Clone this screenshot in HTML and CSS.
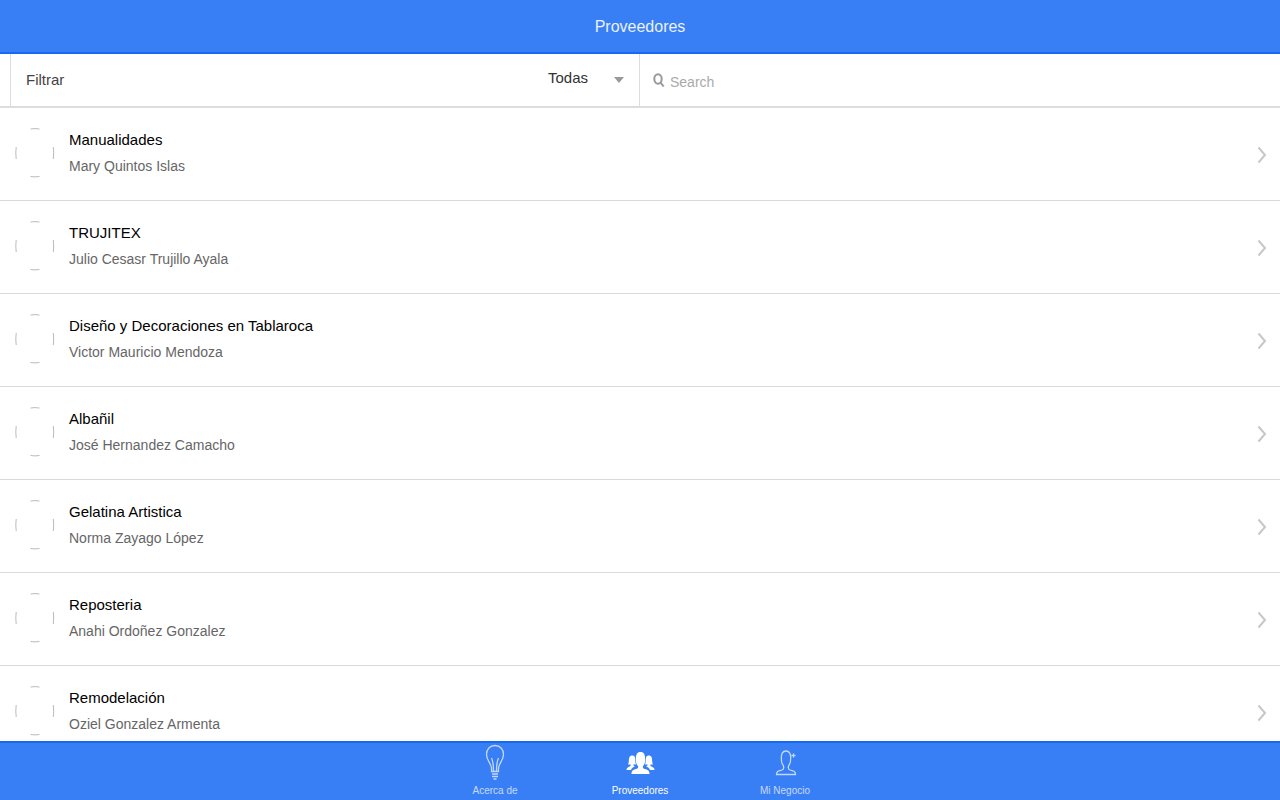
FILE: index.html
```html
<!DOCTYPE html>
<html lang="es">
<head>
<meta charset="utf-8">
<meta name="viewport" content="width=device-width, initial-scale=1">
<title>Proveedores</title>
<link rel="stylesheet" href="styles.css">
</head>
<body>
<svg class="defs" aria-hidden="true">
  <symbol id="avatar" viewBox="0 0 40 50"><path d="M15.500 1q4.500-.8 9 0M15.500 48.500q4.500.8 9 0M1.200 19q-.8 6 0 12M38.300 19q.8 6 0 12"/></symbol>
  <symbol id="chevron" viewBox="0 0 10 18"><path d="M1.500 1.500L8 9l-6.500 7.500"/></symbol>
</svg>
<header class="bar"><h1 class="title">Proveedores</h1></header>
<div class="filters">
  <div class="filter">
    <label class="filter-label" for="category">Filtrar</label>
    <div class="picker">
      <select class="select" id="category"><option>Todas</option></select>
      <svg class="caret" viewBox="0 0 10 6" aria-hidden="true"><path d="M0 0h10L5 6z"/></svg>
    </div>
  </div>
  <label class="search">
    <svg class="lens" viewBox="0 0 12 14" aria-hidden="true"><ellipse cx="5" cy="6" rx="3.700" ry="4.700"/><path d="M7.500 9.500l3.200 4"/></svg>
    <input class="search-input" type="search" placeholder="Search" aria-label="Search">
  </label>
</div>
<main class="content">
  <ul class="list">
    <li><a class="item" href="#"><svg class="avatar"><use href="#avatar"/></svg><span class="text"><span class="name">Manualidades</span><span class="owner">Mary Quintos Islas</span></span><svg class="chevron"><use href="#chevron"/></svg></a></li>
    <li><a class="item" href="#"><svg class="avatar"><use href="#avatar"/></svg><span class="text"><span class="name">TRUJITEX</span><span class="owner">Julio Cesasr Trujillo Ayala</span></span><svg class="chevron"><use href="#chevron"/></svg></a></li>
    <li><a class="item" href="#"><svg class="avatar"><use href="#avatar"/></svg><span class="text"><span class="name">Diseño y Decoraciones en Tablaroca</span><span class="owner">Victor Mauricio Mendoza</span></span><svg class="chevron"><use href="#chevron"/></svg></a></li>
    <li><a class="item" href="#"><svg class="avatar"><use href="#avatar"/></svg><span class="text"><span class="name">Albañil</span><span class="owner">José Hernandez Camacho</span></span><svg class="chevron"><use href="#chevron"/></svg></a></li>
    <li><a class="item" href="#"><svg class="avatar"><use href="#avatar"/></svg><span class="text"><span class="name">Gelatina Artistica</span><span class="owner">Norma Zayago López</span></span><svg class="chevron"><use href="#chevron"/></svg></a></li>
    <li><a class="item" href="#"><svg class="avatar"><use href="#avatar"/></svg><span class="text"><span class="name">Reposteria</span><span class="owner">Anahi Ordoñez Gonzalez</span></span><svg class="chevron"><use href="#chevron"/></svg></a></li>
    <li><a class="item" href="#"><svg class="avatar"><use href="#avatar"/></svg><span class="text"><span class="name">Remodelación</span><span class="owner">Oziel Gonzalez Armenta</span></span><svg class="chevron"><use href="#chevron"/></svg></a></li>
  </ul>
</main>
<nav class="tabs">
  <a class="tab" href="#">
    <svg class="tab-icon" viewBox="0 0 30 38" aria-hidden="true"><path d="M11.500 28.500v-3.500C11 20 6.500 17.500 6.500 11.500 6.500 6 10 2.500 15 2.500s8.500 3.500 8.500 9C23.500 17.500 19 20 18.500 25v3.500zM13.500 28c0-6 0-9-2-13M16.500 28c0-6 0-9 2-13M12 31h6M12 33.500h6M13.500 36h3"/></svg>
    <span>Acerca de</span>
  </a>
  <a class="tab active" href="#" aria-current="page">
    <svg class="tab-icon" viewBox="0 0 30 38" aria-hidden="true"><path d="M6.500 31c0-3.500 1.500-4 4.500-5 2-.5 2.500-1.500 2-3-1.500-1.500-2.200-3.500-2.200-6.500 0-5 1.200-7.500 4.700-7.500s4.700 2.500 4.700 7.500c0 3-.7 5-2.200 6.500-.5 1.500 0 2.500 2 3 3 1 4.500 1.500 4.500 5z"/><path d="M1.500 27c0-2 1-2.500 3-3.500 1-.5 1.500-1 1-2H3c1.200-1.500.5-5.500 1.500-7.500 1-2 4.500-2 5.300 0 .7 2 .2 5 1.200 7.500H8.500c-.3 1 .2 1.500 1.500 2-2 .8-3.500 1.500-4 3.500zM29.500 27c0-2-1-2.500-3-3.500-1-.5-1.500-1-1-2H28c-1.200-1.500-.5-5.500-1.500-7.500-1-2-4.500-2-5.300 0-.7 2-.2 5-1.200 7.500h2.500c.3 1-.2 1.500-1.500 2 2 .8 3.500 1.500 4 3.500z"/></svg>
    <span>Proveedores</span>
  </a>
  <a class="tab" href="#">
    <svg class="tab-icon" viewBox="0 0 30 38" aria-hidden="true"><path d="M6.500 31.500c0-3.500 2-3.500 5.500-4.500 2-.7 1.800-3 1.300-4.500-1.500-1.500-2-4-2-7.500 0-4.500 1.200-7 4.700-7s4.700 2.500 4.700 7c0 3.500-.5 6-2 7.500-.5 1.500-.7 3.800 1.300 4.500 3.500 1 5.500 1 5.500 4.500zM21.500 12.500h4M23.500 10.500v4"/></svg>
    <span>Mi Negocio</span>
  </a>
</nav>
</body>
</html>
```
FILE: styles.css
```css
* { box-sizing: border-box; }
body {
  margin: 0;
  height: 100vh;
  display: flex;
  flex-direction: column;
  background: #fff;
  color: #000;
  font-family: "Liberation Sans", sans-serif;
}
svg { flex: none; fill: none; }
.defs { position: absolute; width: 0; height: 0; }
.bar {
  flex: none;
  display: flex;
  justify-content: center;
  padding: 14px 16px 13px;
  background: #387ef5;
  border-bottom: 2px solid #1769f2;
  color: #fff;
}
.title { margin: 0; font-size: 16px; line-height: 25px; font-weight: 400; opacity: .9; }
.filters {
  flex: none;
  display: grid;
  grid-template-columns: 1fr 1fr;
  border-bottom: 2px solid #ddd;
}
.filter {
  display: flex;
  justify-content: space-between;
  margin-left: 10px;
  padding-left: 15px;
  border: 1px solid #ddd;
  border-width: 0 1px;
}
.filter-label { padding-top: 14px; font-size: 15px; line-height: 24px; color: #444; }
.picker { display: flex; align-items: center; position: relative; }
.select {
  appearance: none;
  border: 0;
  background: none;
  padding: 0 50px 5px 16px;
  font: 15px "Liberation Sans", sans-serif;
  color: #333;
}
.caret { position: absolute; right: 15px; width: 10px; height: 6px; fill: #999; pointer-events: none; }
.search { display: flex; align-items: center; padding: 0 13px; }
.lens { width: 12px; height: 14px; stroke: #999; stroke-width: 2; }
.search-input {
  flex: 1;
  height: 52px;
  border: 0;
  outline: 0;
  background: none;
  padding: 4px 0 0 5px;
  font: 14px "Liberation Sans", sans-serif;
}
.search-input::placeholder { color: #aaa; }
.content { flex: 1; min-height: 0; overflow: hidden; }
.list { margin: 0; padding: 0; list-style: none; }
.item {
  display: flex;
  align-items: center;
  padding: 18px 13px 21px 15px;
  border-bottom: 1px solid #d9d9d9;
  color: inherit;
  text-decoration: none;
}
.avatar { width: 40px; height: 50px; stroke: #bbb; }
.text { flex: 1; display: flex; flex-direction: column; padding-left: 14px; height: 53px; }
.name { font-size: 15px; line-height: 28px; }
.owner { font-size: 14px; line-height: 25px; color: #666; }
.chevron { width: 10px; height: 18px; margin-top: 4px; stroke: #c7c7c7; stroke-width: 2; }
.tabs {
  flex: none;
  display: flex;
  justify-content: center;
  background: #387ef5;
  border-top: 2px solid #1769f2;
}
.tab {
  width: 145px;
  display: flex;
  flex-direction: column;
  align-items: center;
  color: #fff;
  font-size: 10px;
  line-height: 19px;
  text-decoration: none;
  opacity: .7;
}
.tab.active { opacity: 1; }
.tab-icon { width: 30px; height: 38px; stroke: #fff; stroke-width: 1.3px; }
.active .tab-icon { fill: #fff; stroke: none; }
```
